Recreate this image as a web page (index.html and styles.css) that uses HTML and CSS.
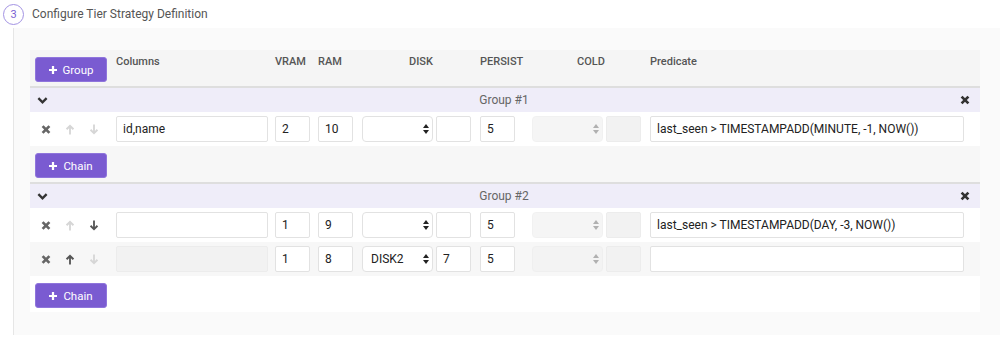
FILE: index.html
```html
<!DOCTYPE html>
<html lang="en">
<head>
  <meta charset="UTF-8" />
  <title>Configure Tier Strategy</title>
  <link rel="stylesheet" href="styles.css">
</head>
<body>
  <div class="step_title">
    <span class="step_num">3</span>
    <span>Configure Tier Strategy Definition</span>
  </div>

  <div class="step_body">
    <div class="tiers">
      <!-- cabeçalho -->
      <div class="row head">
        <div class="cell">
          <button class="btn">
            <svg class="plus" viewBox="0 0 10 10"><path d="M3.6 0h2.8v3.6H10v2.8H6.4V10H3.6V6.4H0V3.6h3.6z"/></svg>
            Group
          </button>
        </div>
        <div class="cell label">Columns</div>
        <div class="cell label">VRAM</div>
        <div class="cell label">RAM</div>
        <div class="cell label center span2">DISK</div>
        <div class="cell label">PERSIST</div>
        <div class="cell label center span2">COLD</div>
        <div class="cell label">Predicate</div>
      </div>

      <!-- grupo 1 -->
      <div class="group">
        <div class="group_head">
          <svg class="chev" viewBox="0 0 12 9"><polyline points="1.5,2 6,6.5 10.5,2"/></svg>
          <span class="group_name">Group #1</span>
          <svg class="times dark" viewBox="0 0 10 10"><path d="M1.6 1.6l6.8 6.8M8.4 1.6l-6.8 6.8"/></svg>
        </div>
        <div class="row item">
          <div class="cell actions">
            <svg class="times" viewBox="0 0 10 10"><path d="M1.6 1.6l6.8 6.8M8.4 1.6l-6.8 6.8"/></svg>
            <svg class="arrow off" viewBox="0 0 10 12"><path d="M5 0.5L9.5 5 8 6.5 6 4.5V11.5H4V4.5L2 6.5 0.5 5z"/></svg>
            <svg class="arrow down off" viewBox="0 0 10 12"><path d="M5 0.5L9.5 5 8 6.5 6 4.5V11.5H4V4.5L2 6.5 0.5 5z"/></svg>
          </div>
          <div class="cell"><input class="inp w_cols" value="id,name"></div>
          <div class="cell"><input class="inp w_num" value="2"></div>
          <div class="cell"><input class="inp w_num" value="10"></div>
          <div class="cell">
            <div class="sel">
              <select><option></option><option>DISK2</option></select>
              <svg viewBox="0 0 6 10"><path d="M3 0L6 4H0zM3 10L0 6h6z"/></svg>
            </div>
          </div>
          <div class="cell"><input class="inp w_num" value=""></div>
          <div class="cell"><input class="inp w_num" value="5"></div>
          <div class="cell">
            <div class="sel off">
              <select disabled><option></option></select>
              <svg viewBox="0 0 6 10"><path d="M3 0L6 4H0zM3 10L0 6h6z"/></svg>
            </div>
          </div>
          <div class="cell"><input class="inp w_num" disabled></div>
          <div class="cell"><input class="inp w_pred" value="last_seen > TIMESTAMPADD(MINUTE, -1, NOW())"></div>
        </div>
        <div class="row chain">
          <div class="cell">
            <button class="btn">
              <svg class="plus" viewBox="0 0 10 10"><path d="M3.6 0h2.8v3.6H10v2.8H6.4V10H3.6V6.4H0V3.6h3.6z"/></svg>
              Chain
            </button>
          </div>
        </div>
      </div>

      <!-- grupo 2 -->
      <div class="group">
        <div class="group_head">
          <svg class="chev" viewBox="0 0 12 9"><polyline points="1.5,2 6,6.5 10.5,2"/></svg>
          <span class="group_name">Group #2</span>
          <svg class="times dark" viewBox="0 0 10 10"><path d="M1.6 1.6l6.8 6.8M8.4 1.6l-6.8 6.8"/></svg>
        </div>
        <div class="row item">
          <div class="cell actions">
            <svg class="times" viewBox="0 0 10 10"><path d="M1.6 1.6l6.8 6.8M8.4 1.6l-6.8 6.8"/></svg>
            <svg class="arrow off" viewBox="0 0 10 12"><path d="M5 0.5L9.5 5 8 6.5 6 4.5V11.5H4V4.5L2 6.5 0.5 5z"/></svg>
            <svg class="arrow down" viewBox="0 0 10 12"><path d="M5 0.5L9.5 5 8 6.5 6 4.5V11.5H4V4.5L2 6.5 0.5 5z"/></svg>
          </div>
          <div class="cell"><input class="inp w_cols" value=""></div>
          <div class="cell"><input class="inp w_num" value="1"></div>
          <div class="cell"><input class="inp w_num" value="9"></div>
          <div class="cell">
            <div class="sel">
              <select><option></option><option>DISK2</option></select>
              <svg viewBox="0 0 6 10"><path d="M3 0L6 4H0zM3 10L0 6h6z"/></svg>
            </div>
          </div>
          <div class="cell"><input class="inp w_num" value=""></div>
          <div class="cell"><input class="inp w_num" value="5"></div>
          <div class="cell">
            <div class="sel off">
              <select disabled><option></option></select>
              <svg viewBox="0 0 6 10"><path d="M3 0L6 4H0zM3 10L0 6h6z"/></svg>
            </div>
          </div>
          <div class="cell"><input class="inp w_num" disabled></div>
          <div class="cell"><input class="inp w_pred" value="last_seen > TIMESTAMPADD(DAY, -3, NOW())"></div>
        </div>
        <div class="row item">
          <div class="cell actions">
            <svg class="times" viewBox="0 0 10 10"><path d="M1.6 1.6l6.8 6.8M8.4 1.6l-6.8 6.8"/></svg>
            <svg class="arrow" viewBox="0 0 10 12"><path d="M5 0.5L9.5 5 8 6.5 6 4.5V11.5H4V4.5L2 6.5 0.5 5z"/></svg>
            <svg class="arrow down off" viewBox="0 0 10 12"><path d="M5 0.5L9.5 5 8 6.5 6 4.5V11.5H4V4.5L2 6.5 0.5 5z"/></svg>
          </div>
          <div class="cell"><input class="inp w_cols" disabled></div>
          <div class="cell"><input class="inp w_num" value="1"></div>
          <div class="cell"><input class="inp w_num" value="8"></div>
          <div class="cell">
            <div class="sel">
              <select><option>DISK2</option><option></option></select>
              <svg viewBox="0 0 6 10"><path d="M3 0L6 4H0zM3 10L0 6h6z"/></svg>
            </div>
          </div>
          <div class="cell"><input class="inp w_num" value="7"></div>
          <div class="cell"><input class="inp w_num" value="5"></div>
          <div class="cell">
            <div class="sel off">
              <select disabled><option></option></select>
              <svg viewBox="0 0 6 10"><path d="M3 0L6 4H0zM3 10L0 6h6z"/></svg>
            </div>
          </div>
          <div class="cell"><input class="inp w_num" disabled></div>
          <div class="cell"><input class="inp w_pred" value=""></div>
        </div>
        <div class="row chain">
          <div class="cell">
            <button class="btn">
              <svg class="plus" viewBox="0 0 10 10"><path d="M3.6 0h2.8v3.6H10v2.8H6.4V10H3.6V6.4H0V3.6h3.6z"/></svg>
              Chain
            </button>
          </div>
        </div>
      </div>
    </div>
  </div>
</body>
</html>
```

FILE: styles.css
```css
body {
  font-family: Roboto, "Noto Sans", sans-serif;
  margin: 0;
  background: #fff;
  color: #333;
}

.step_title {
  height: 28px;
  display: flex;
  align-items: center;
  gap: 8px;
  padding-left: 3px;
  font-size: 12px;
  color: #555;
}

.step_num {
  width: 19px;
  height: 19px;
  border: 1px solid #a393e3;
  border-radius: 50%;
  color: #7a5fd3;
  font-size: 11px;
  display: flex;
  align-items: center;
  justify-content: center;
}

.step_body {
  margin-left: 13px;
  border-left: 1px solid #e6e6e6;
  background: #fafafa;
  padding: 22px 20px 23px 16px;
}

.tiers {
  background: #fff;
}

.row {
  display: grid;
  grid-template-columns: 86px 159px 43px 44px 74px 44px 52px 74px 44px 1fr;
}

.cell {
  display: flex;
  align-items: center;
}

.head {
  background: #f5f5f5;
  height: 36px;
  border-bottom: 2px solid #dedede;
}

.head .cell {
  align-items: flex-start;
}

.head .label {
  font-size: 11px;
  font-weight: 500;
  color: #555;
  padding-top: 5px;
}

.head .center {
  justify-content: center;
}

.head .span2 {
  grid-column: span 2;
}

.btn {
  margin: 7px 0 0 5px;
  width: 72px;
  height: 25px;
  border: 1px solid #8f75dc;
  border-radius: 3px;
  background: #7a5bd1;
  color: #fff;
  font-family: inherit;
  font-size: 11.5px;
  display: flex;
  align-items: center;
  justify-content: center;
  gap: 6px;
  padding: 0;
  cursor: pointer;
}

.plus {
  width: 8px;
  height: 8px;
  fill: #fff;
}

.group + .group {
  border-top: 2px solid #dedede;
}

.group_head {
  background: #efedf9;
  height: 24px;
  display: flex;
  align-items: center;
  justify-content: space-between;
  padding: 0 10px 0 7px;
}

.group_name {
  font-size: 12px;
  color: #666;
}

.chev {
  width: 11px;
  height: 9px;
  fill: none;
  stroke: #333;
  stroke-width: 2.6;
}

.item {
  height: 34px;
}

.group .row:nth-child(odd) {
  background: #f7f7f7;
}

.chain {
  height: 36px;
  box-sizing: border-box;
  padding-top: 7px;
  display: block;
}

.chain .cell {
  display: block;
}

.chain .btn {
  margin-top: 0;
}

.actions {
  padding-left: 11px;
}

.actions svg {
  width: 10px;
  height: 11px;
  margin-right: 14px;
}

.times {
  width: 10px;
  height: 10px;
  fill: none;
  stroke: #666;
  stroke-width: 2.7;
}

.times.dark {
  stroke: #333;
}

.arrow {
  fill: #555;
}

.arrow.down {
  transform: rotate(180deg);
}

.arrow.off {
  fill: #d6d6d6;
}

.inp {
  height: 26px;
  box-sizing: border-box;
  border: 1px solid #e2e2e2;
  border-radius: 2px;
  background: #fff;
  padding: 0 6px;
  font-family: inherit;
  font-size: 12px;
  color: #222;
  outline: none;
}

.inp:disabled {
  background: #f2f2f2;
  border-color: #ececec;
}

.w_cols { width: 152px; }
.w_num { width: 35px; }
.w_pred { width: 314px; }

.sel {
  position: relative;
  width: 71px;
  height: 26px;
}

.sel select {
  appearance: none;
  -webkit-appearance: none;
  width: 100%;
  height: 100%;
  border: 1px solid #e2e2e2;
  border-radius: 4px;
  background: #fff;
  padding: 0 8px;
  font-family: inherit;
  font-size: 12px;
  color: #222;
  outline: none;
}

.sel svg {
  position: absolute;
  right: 4px;
  top: 8px;
  width: 6px;
  height: 10px;
  fill: #222;
}

.sel.off select {
  background: #f2f2f2;
  border-color: #ececec;
}

.sel.off svg {
  fill: #b0b0b0;
}
```
